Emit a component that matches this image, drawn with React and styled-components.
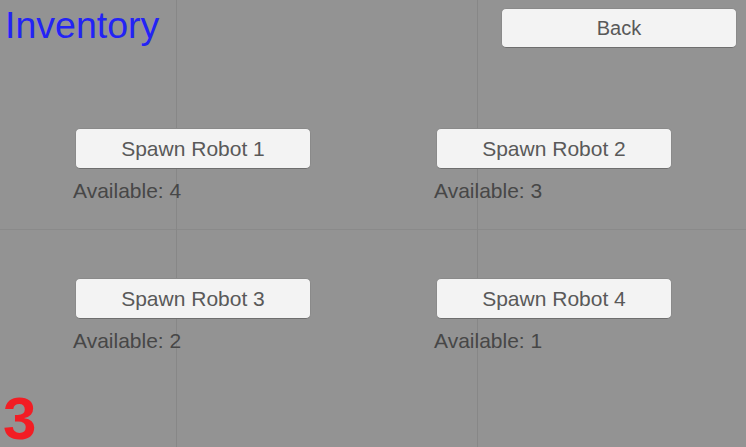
import React from 'react'
import styled, { createGlobalStyle } from 'styled-components'

const GlobalStyle = createGlobalStyle`
    html, body {
        margin: 0;
        padding: 0;
        overflow: hidden;
    }
    body {
        font-family: 'Liberation Sans', Arial, sans-serif;
    }
`

const Screen = styled.div`
    box-sizing: border-box;
    width: 746px;
    height: 447px;
    padding: 8px 9px 0 6px;
    display: flex;
    flex-direction: column;
    overflow: hidden;
    background-color: #939393;
    /* faint editor grid behind the UI */
    background-image:
        linear-gradient(to right, transparent 176px, #878787 176px, #878787 177px, transparent 177px),
        linear-gradient(to right, transparent 477px, #878787 477px, #878787 478px, transparent 478px),
        linear-gradient(to bottom, transparent 229px, #8a8a8a 229px, #8a8a8a 230px, transparent 230px);
`

const Header = styled.header`
    display: flex;
    justify-content: space-between;
    align-items: flex-start;
`

const Title = styled.h1`
    margin: -3px 0 0 -1px;
    font-size: 37.5px;
    line-height: 40px;
    font-weight: normal;
    color: #2323f5;
`

const Button = styled.button`
    box-sizing: border-box;
    width: 236px;
    height: ${p => p.$tall ? 40 : 41}px;
    padding: 0;
    border: 1px solid #8a8a8a;
    border-bottom-color: #6e6e6e;
    border-radius: 5px;
    background: #f3f3f3;
    color: #595959;
    font-family: 'Liberation Sans', Arial, sans-serif;
    font-size: ${p => p.$size || 21}px;
    cursor: pointer;
`

const Grid = styled.div`
    display: grid;
    grid-template-columns: 236px 236px;
    column-gap: 125px;
    row-gap: 75px;
    margin: 80px 0 0 69px;
`

const Slot = styled.div`
    display: flex;
    flex-direction: column;
`

const Label = styled.span`
    margin: 10px 0 0 -2px;
    font-size: 21px;
    line-height: 24px;
    color: #474747;
`

const Corner = styled.div`
    margin: auto 0 2px -3px;
    font-size: 60px;
    line-height: 52px;
    font-weight: bold;
    color: #f21d24;
`

const robots = [
    { name: 'Spawn Robot 1', available: 4 },
    { name: 'Spawn Robot 2', available: 3 },
    { name: 'Spawn Robot 3', available: 2 },
    { name: 'Spawn Robot 4', available: 1 },
]

const App = () => {
    return (
        <Screen>
            <GlobalStyle />
            <Header>
                <Title>Inventory</Title>
                <Button $tall $size={20}>Back</Button>
            </Header>
            <Grid>
                {robots.map(r => (
                    <Slot key={r.name}>
                        <Button>{r.name}</Button>
                        <Label>Available: {r.available}</Label>
                    </Slot>
                ))}
            </Grid>
            <Corner>3</Corner>
        </Screen>
    )
}

export default App
